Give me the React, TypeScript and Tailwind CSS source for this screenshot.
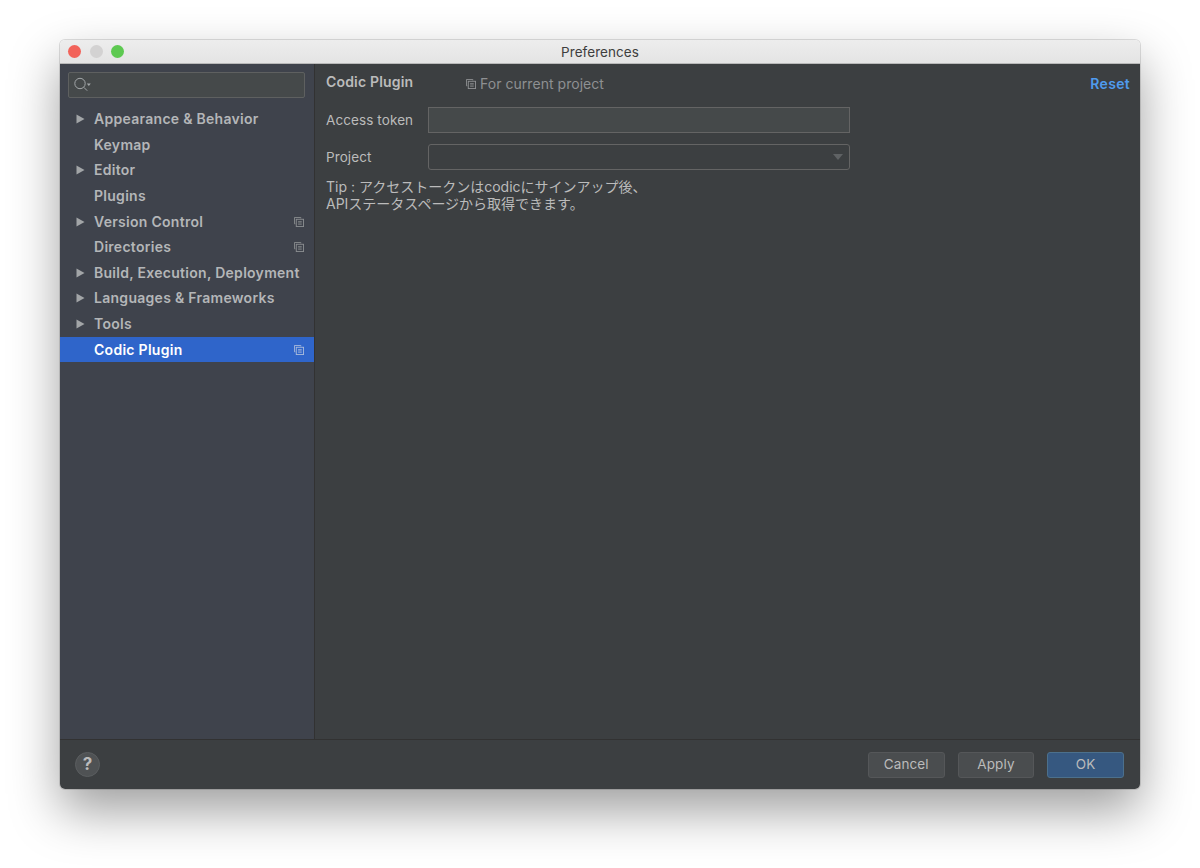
const SIDEBAR_ITEMS = [
  { label: 'Appearance & Behavior', arrow: true },
  { label: 'Keymap' },
  { label: 'Editor', arrow: true },
  { label: 'Plugins' },
  { label: 'Version Control', arrow: true, copy: true },
  { label: 'Directories', copy: true },
  { label: 'Build, Execution, Deployment', arrow: true },
  { label: 'Languages & Frameworks', arrow: true },
  { label: 'Tools', arrow: true },
  { label: 'Codic Plugin', copy: true, selected: true },
];

function CopyIcon({ className }: { className?: string }) {
  return (
    <svg width="10" height="10" viewBox="0 0 11 11" fill="none" stroke="currentColor" strokeWidth="1" className={className}>
      <path d="M7.5 1.5v-1h-7v7h1" />
      <rect x="2.5" y="2.5" width="8" height="8" />
      <path d="M4.5 5h4M4.5 6.5h4M4.5 8h4" strokeWidth="0.8" />
    </svg>
  );
}

function SearchIcon() {
  return (
    <svg width="18" height="16" viewBox="0 0 18 16" fill="none" className="ml-[5px] text-[#a3a7a9]">
      <circle cx="6" cy="6.5" r="5.2" stroke="currentColor" strokeWidth="1" />
      <path d="M9.8 10.3l3.4 3.4" stroke="currentColor" strokeWidth="1" />
      <path d="M12.8 6.5h4l-2 2.5z" fill="currentColor" />
    </svg>
  );
}

function SidebarRow({ item }: { item: (typeof SIDEBAR_ITEMS)[number] }) {
  return (
    <div className={`flex items-center h-[25.6px] pl-[16px] pr-[10px] ${item.selected ? 'bg-[#2f65ca] text-white' : 'text-[#b4b6b8]'}`}>
      <span className="w-[18px] flex-none">
        {item.arrow && (
          <svg width="9" height="10" viewBox="0 0 9 10" className="fill-[#a2a5a7]">
            <path d="M0.5 0.5L8.5 5L0.5 9.5z" />
          </svg>
        )}
      </span>
      <span className="text-[14px] font-semibold tracking-[0.28px] whitespace-nowrap pb-px">{item.label}</span>
      {item.copy && <CopyIcon className={`ml-auto ${item.selected ? 'text-[#a9bbdc]' : 'text-[#8b8e90]'}`} />}
    </div>
  );
}

function FooterButton({ label, primary }: { label: string; primary?: boolean }) {
  return (
    <button
      className={`w-[76.7px] h-[26px] rounded-[3px] border text-[13.5px] tracking-[0.1px] ${
        primary ? 'bg-[#365880] border-[#4c708c] text-[#bbbbbb]' : 'bg-[#4a4d4f] border-[#555759] text-[#bbbbbb]'
      }`}
    >
      {label}
    </button>
  );
}

export default function App() {
  return (
    <div
      className="w-[1200px] h-[868px] bg-white pt-[40px] pl-[60px] overflow-hidden"
      style={{ fontFamily: 'Inter, "Noto Sans CJK JP", sans-serif' }}
    >
      <div className="w-[1080px] h-[749px] flex flex-col rounded-[5px] overflow-hidden shadow-[0_0_0_1px_rgba(0,0,0,0.12),0_22px_50px_rgba(0,0,0,0.38)]">
        <div className="relative flex items-center h-[24px] flex-none bg-gradient-to-b from-[#ededed] to-[#e4e4e4] border-b border-[#b9b9b9] pl-[8px] gap-[8.5px]">
          <span className="w-[13px] h-[13px] rounded-full bg-[#f2635a]" />
          <span className="w-[13px] h-[13px] rounded-full bg-[#d3d2d2]" />
          <span className="w-[13px] h-[13px] rounded-full bg-[#5dc951]" />
          <span className="absolute inset-x-0 top-[2px] text-center text-[13.5px] leading-[20px] text-[#3e3e3e] tracking-[0.05px]">Preferences</span>
        </div>

        <div className="flex flex-1 min-h-0 bg-[#3c3f41]">
          <div className="w-[255px] flex-none bg-[#3f434c] border-r border-[#323232] pt-[8px]">
            <div className="flex items-center h-[26px] ml-[8px] mr-[9px] bg-[#45494a] border border-[#5e6060] rounded-[2px]">
              <SearchIcon />
            </div>
            <div className="mt-[8.4px]">
              {SIDEBAR_ITEMS.map((item) => (
                <SidebarRow key={item.label} item={item} />
              ))}
            </div>
          </div>

          <div className="flex-1 pl-[11px] pr-[10px] pt-[8px] text-[#bbbbbb]">
            <div className="flex items-start h-[24px]">
              <span className="text-[14px] font-semibold leading-[20px] tracking-[0.18px] w-[140px]">Codic Plugin</span>
              <span className="flex items-center mt-[2px] text-[14px] leading-[20px] tracking-[0.04px] text-[#8e9092]">
                <CopyIcon className="mr-[4px] text-[#909294]" />
                For current project
              </span>
              <span className="ml-auto mt-[2px] text-[14px] font-semibold leading-[20px] tracking-[0.3px] text-[#4f9bee]">Reset</span>
            </div>

            <div className="flex items-center mt-[11px] h-[26px]">
              <span className="w-[102px] text-[13.5px] tracking-[0.1px]">Access token</span>
              <div className="w-[422px] h-[26px] bg-[#45494a] border border-[#646464]" />
            </div>
            <div className="flex items-center mt-[11px] h-[26px]">
              <span className="w-[102px] text-[13.5px] tracking-[0.1px]">Project</span>
              <div className="flex items-center justify-end w-[422px] h-[26px] border border-[#646464] rounded-[3px] pr-[6px]">
                <svg width="10" height="6" viewBox="0 0 10 6" className="fill-[#5f6264]">
                  <path d="M0 0h10L5 6z" />
                </svg>
              </div>
            </div>
            <p className="mt-[8px] text-[14px] leading-[17px]">
              Tip : アクセストークンはcodicにサインアップ後、
              <br />
              APIステータスページから取得できます。
            </p>
          </div>
        </div>

        <div className="flex items-center h-[50px] flex-none bg-[#3c3f41] border-t border-[#323232] pl-[15px] pr-[16px]">
          <div className="flex items-center justify-center w-[25px] h-[25px] rounded-full bg-[#4f5254] border border-[#5b5e60] text-[17px] font-bold text-[#bbbbbb]">
            ?
          </div>
          <div className="ml-auto flex gap-[13px]">
            <FooterButton label="Cancel" />
            <FooterButton label="Apply" />
            <FooterButton label="OK" primary />
          </div>
        </div>
      </div>
    </div>
  );
}
